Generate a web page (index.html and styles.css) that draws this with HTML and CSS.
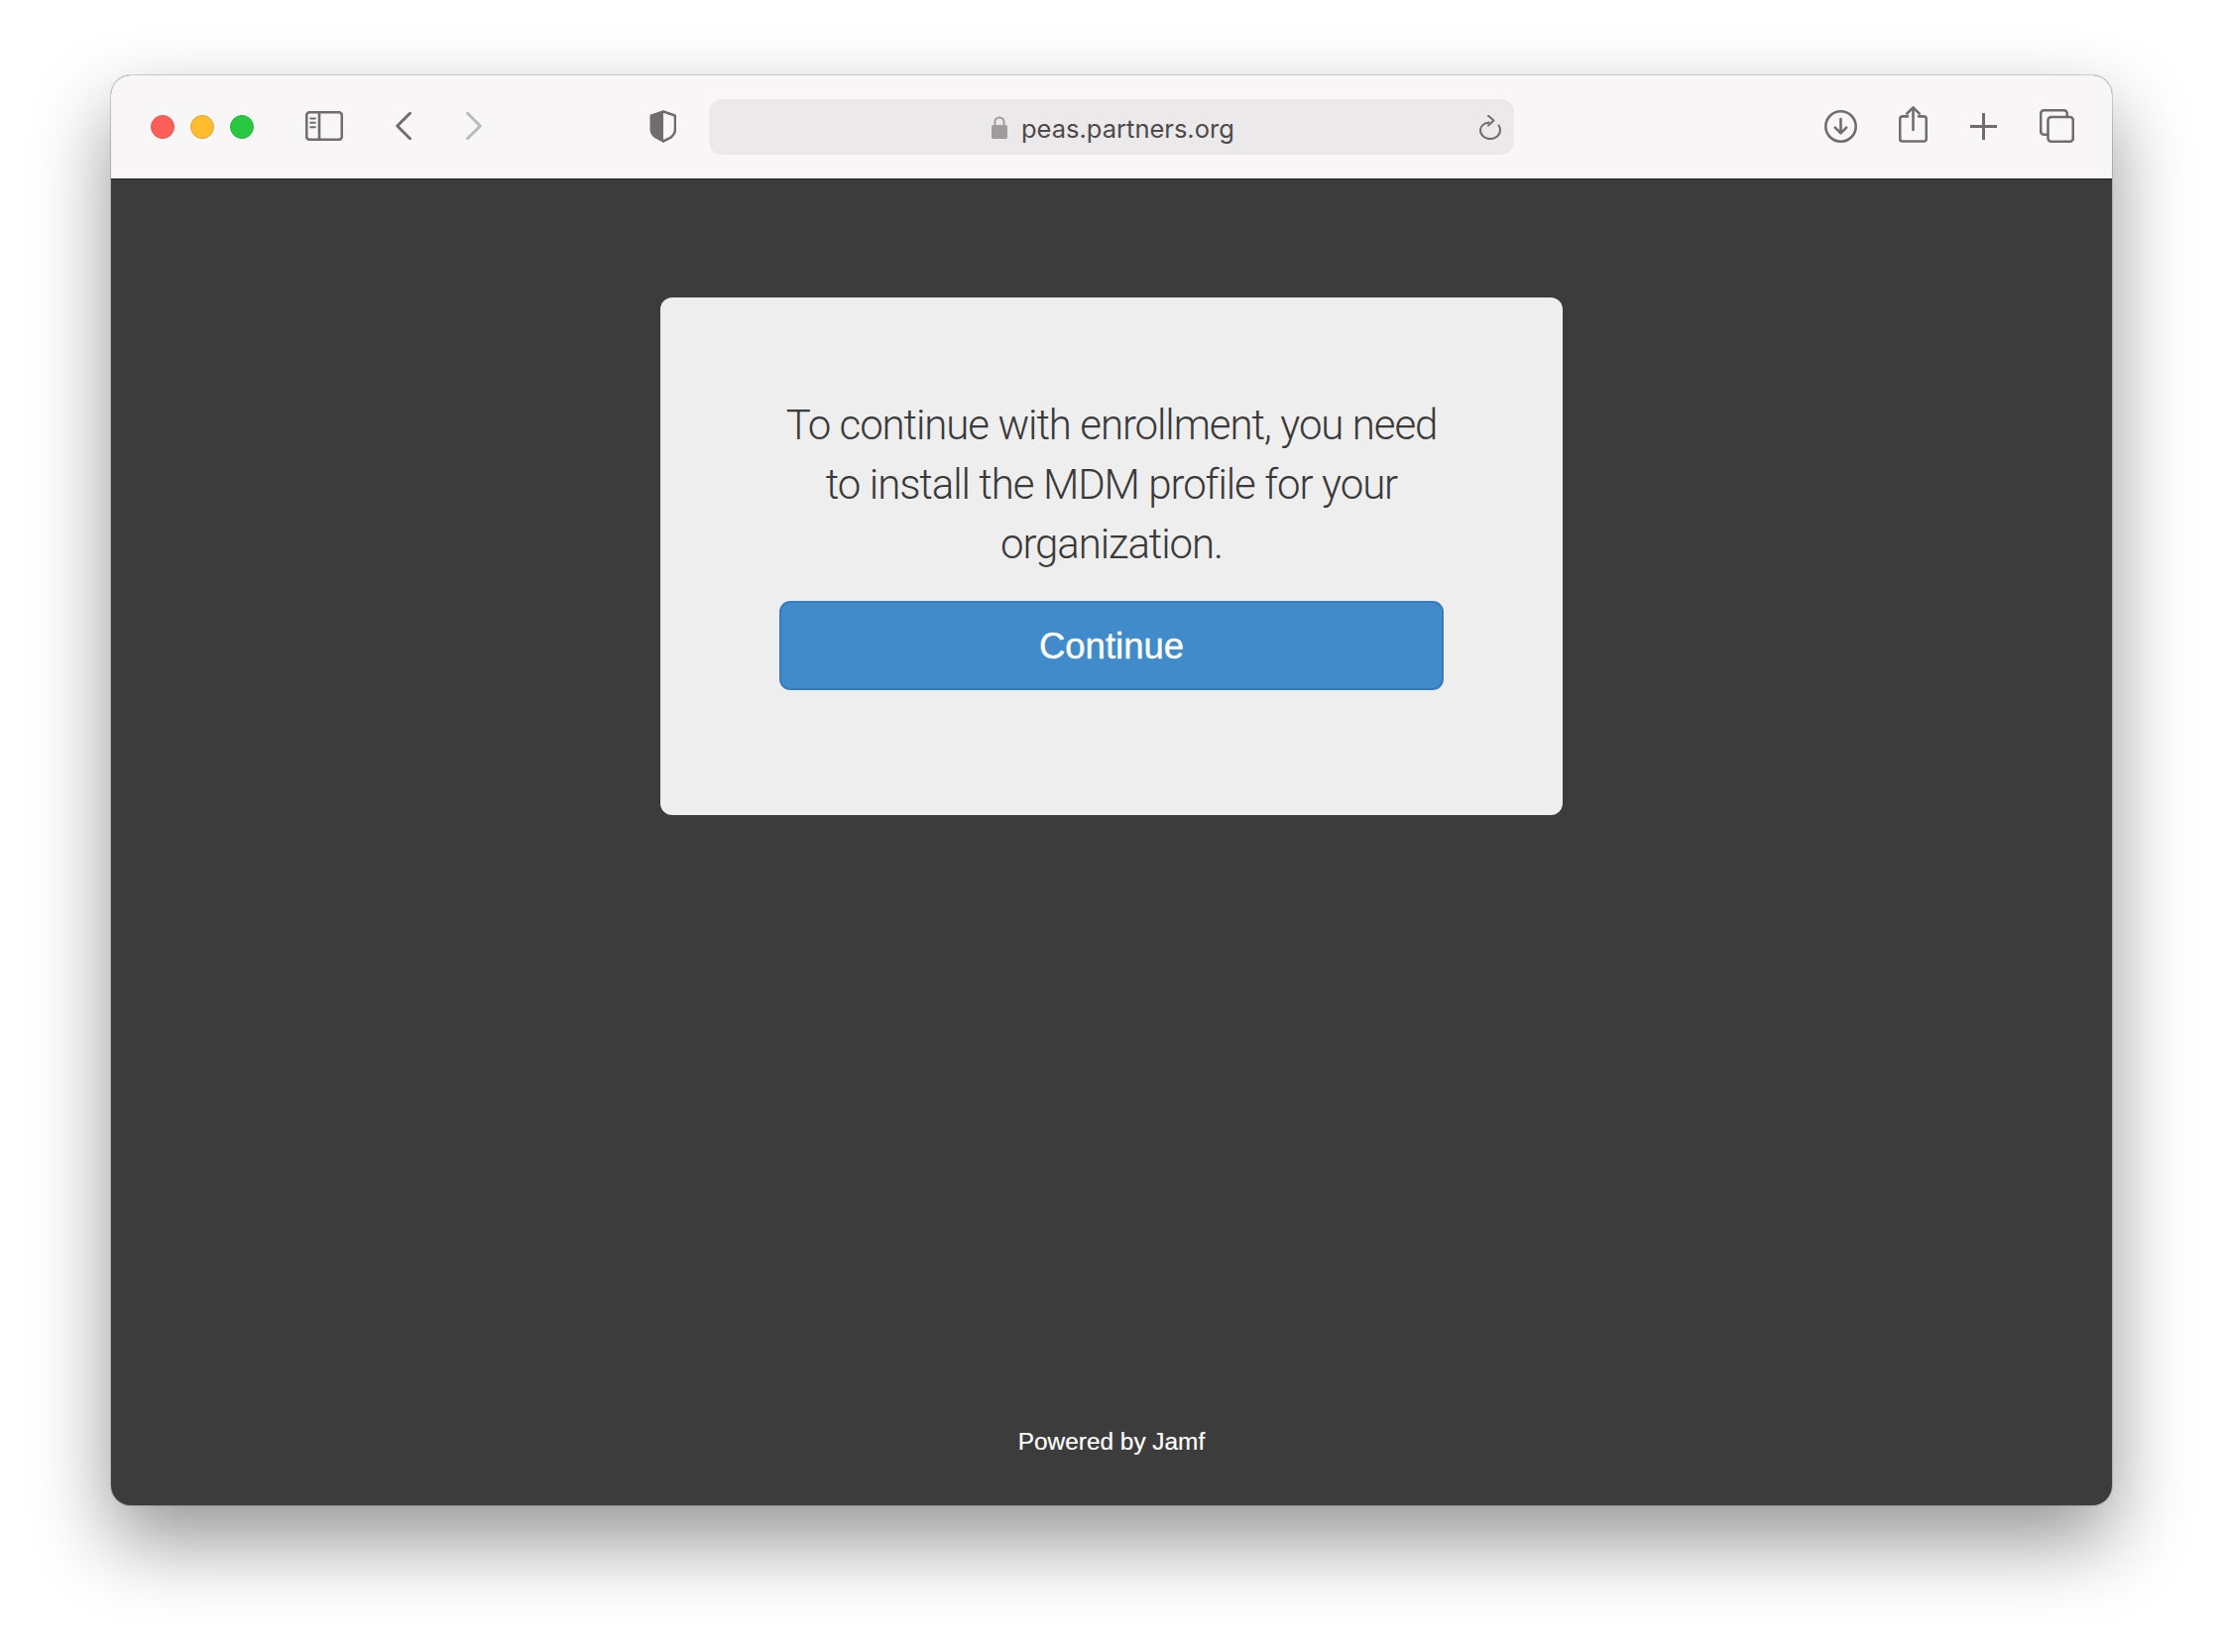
FILE: index.html
```html
<!DOCTYPE html>
<html lang="en">
<head>
<meta charset="utf-8">
<title>peas.partners.org</title>
<link rel="stylesheet" href="styles.css">
</head>
<body>
<div class="window">
  <header class="toolbar">
    <div class="lights">
      <span class="light light-red"></span>
      <span class="light light-yellow"></span>
      <span class="light light-green"></span>
    </div>
    <svg class="icon i-sidebar" width="38" height="30" viewBox="0 0 38 30" fill="none"><rect x="1.2" y="1.2" width="35.6" height="27.6" rx="3"/><path d="M14 1.2V28.8"/><path class="thin" d="M5.2 7.5H9.8M5.2 11.8H9.8M5.2 16.2H9.8"/></svg>
    <svg class="icon i-back" width="16" height="28" viewBox="0 0 16 28" fill="none"><path d="M14.5 1.3 1.7 14l12.8 12.7"/></svg>
    <svg class="icon i-forward" width="16" height="28" viewBox="0 0 16 28" fill="none"><path d="M1.5 1.3 14.3 14 1.500 26.7"/></svg>
    <svg class="icon i-shield" width="27" height="33" viewBox="0 0 27 33" fill="none"><path class="fill" d="M14 .3 1.8 4.3C1 4.6.5 5.2.5 6v13.5c0 3.6 1.8 6.1 4.7 8.500L14 32.7z"/><path d="M14 1.5 25 5.2c.6.2 1 .7 1 1.3V19.5c0 3.400-1.600 5.800-4.400 8.100L14 31.4"/></svg>
    <div class="urlbar">
      <svg class="i-lock" width="16" height="23" viewBox="0 0 16 23" fill="none"><path class="shackle" d="M3.4 9.500V6a4.600 4.600 0 0 1 9.200 0v3.500"/><rect class="body" x="0" y="9" width="16" height="14" rx="1.8"/></svg>
      <span class="url">peas.partners.org</span>
      <svg class="icon i-reload" width="22" height="25" viewBox="0 0 22 25" fill="none"><path d="M9.5 7.5C4.600 8.100 1 11.300 1 15.300a10 8.800 0 0 0 20 0c0-1.900-.5-3.400-1.500-4.800"/><path d="M9 .8 14.500 5.500 9 10.500"/></svg>
    </div>
    <svg class="icon i-download" width="33" height="33" viewBox="0 0 33 33" fill="none"><circle cx="16.5" cy="16.5" r="15.2"/><path d="M16.5 9v14M10.8 17.6l5.7 5.7 5.7-5.7"/></svg>
    <svg class="icon i-share" width="29" height="37" viewBox="0 0 29 37" fill="none"><path d="M9 10.4H3.5a2.3 2.3 0 0 0-2.300 2.300v20.500a2.300 2.300 0 0 0 2.300 2.300h22a2.300 2.300 0 0 0 2.300-2.300V12.700a2.300 2.300 0 0 0-2.300-2.300H20"/><path d="M14.500 24V1.800M8.200 7.600l6.300-6.200 6.300 6.200"/></svg>
    <svg class="icon i-plus" width="27" height="27" viewBox="0 0 27 27" fill="none"><path d="M13.5 .5v26M.5 13.500h26"/></svg>
    <svg class="icon i-tabs" width="35" height="34" viewBox="0 0 35 34" fill="none"><path d="M7.5 25.800H4.500a3.300 3.300 0 0 1-3.300-3.300V4.500a3.300 3.300 0 0 1 3.300-3.300h20a3.300 3.300 0 0 1 3.300 3.300v3"/><rect x="8.5" y="8" width="25.3" height="24.8" rx="3.3"/></svg>
  </header>
  <main class="content">
    <section class="card">
      <p class="message">To continue with enrollment, you need to install the MDM profile for your organization.</p>
      <button class="continue" type="button">Continue</button>
    </section>
    <footer class="powered">Powered by Jamf</footer>
  </main>
</div>
</body>
</html>
```
FILE: styles.css
```css
* { box-sizing: border-box; }
html, body { margin: 0; height: 100%; }
body {
  background: #fff;
  padding: 76px 112px 148px;
  font-family: "Liberation Sans", Arial, sans-serif;
}
.window {
  height: 1442px;
  display: flex;
  flex-direction: column;
  border-radius: 20px;
  background: #3c3c3c;
  box-shadow: 0 0 0 1px rgba(0,0,0,.16), 0 36px 80px rgba(0,0,0,.42);
}
.toolbar {
  height: 105px;
  flex: none;
  display: flex;
  align-items: center;
  padding: 0 0 2px 40px;
  background: #f9f6f7;
  border-radius: 20px 20px 0 0;
  border-bottom: 1px solid #1e1e1e;
}
.lights { display: flex; gap: 16px; flex: none; margin-top: 1px; }
.light { width: 24px; height: 24px; border-radius: 50%; border: 1px solid; }
.light-red { background: #ff5f57; border-color: #e5544d; }
.light-yellow { background: #febc2e; border-color: #e0a32a; }
.light-green { background: #28c840; border-color: #25b23a; }
.icon { flex: none; stroke: #716c6d; stroke-width: 2.6; stroke-linecap: round; stroke-linejoin: round; }
.icon .fill { fill: #716c6d; stroke: none; }
.icon .thin { stroke-width: 2; }
.i-sidebar { margin-left: 52px; }
.i-back { margin-left: 53px; stroke-width: 3; }
.i-forward { margin-left: 55px; stroke: #bcb9ba; stroke-width: 3; }
.i-shield { margin-left: 169px; }
.urlbar {
  margin-left: 33px;
  margin-top: 2px;
  width: 812px;
  height: 56px;
  flex: none;
  display: flex;
  align-items: center;
  border-radius: 13px;
  background: #ece9ea;
  padding-left: 285px;
}
.i-lock { flex: none; margin-top: 1px; }
.shackle { stroke: #a09c9d; stroke-width: 2; }
.body { fill: #a09c9d; }
.url {
  margin-left: 14px;
  margin-top: 2px;
  font-family: Inter, "Liberation Sans", sans-serif;
  font-size: 25.5px;
  color: #4c4a4b;
  white-space: nowrap;
}
.i-reload { margin-left: 247px; stroke-width: 2; }
.i-download { margin-left: 313px; }
.i-share { margin-left: 42px; margin-bottom: 3px; }
.i-plus { margin-left: 43px; stroke-width: 3; }
.i-tabs { margin-left: 43px; }
.content {
  flex: 1;
  display: flex;
  flex-direction: column;
  align-items: center;
  padding-top: 119px;
}
.card {
  width: 910px;
  height: 522px;
  padding: 99px 120px 0;
  background: #eee;
  border-radius: 12px;
  text-align: center;
}
.message {
  margin: 0 0 27px;
  font-family: Roboto, "Liberation Sans", sans-serif;
  font-weight: 300;
  font-size: 42px;
  letter-spacing: -1.1px;
  word-spacing: .4px;
  line-height: 60px;
  color: #3a3a3a;
}
.continue {
  display: block;
  width: 670px;
  height: 90px;
  padding: 2px 0 0;
  border: 2px solid #357ebd;
  border-radius: 11px;
  background: #428bca;
  color: #fff;
  font-family: "Liberation Sans", Arial, sans-serif;
  font-size: 36.5px;
  -webkit-text-stroke: .4px #fff;
}
.powered {
  margin-top: auto;
  margin-bottom: 47px;
  font-size: 24.4px;
  line-height: 34px;
  color: #fff;
  -webkit-text-stroke: .2px #fff;
}
```
